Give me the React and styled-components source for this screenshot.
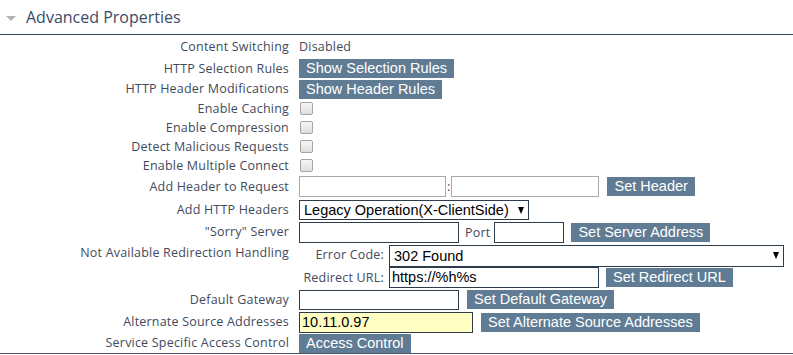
import React from 'react';
import styled, { createGlobalStyle } from 'styled-components';

const GlobalStyle = createGlobalStyle`
  body {
    margin: 0;
    background: #fff;
    font-family: 'Open Sans', sans-serif;
  }
`;

const Section = styled.section`
  width: 793px;
  border-bottom: 1px solid #4d5662;
`;

const Header = styled.div`
  display: flex;
  align-items: center;
  height: 34px;
  padding-left: 6px;
  gap: 10px;
  border-bottom: 1px solid #34495e;
  font-family: 'Open Sans', sans-serif;
  font-size: 16px;
  color: #3b4b67;
`;

const Caret = styled.span`
  width: 0;
  height: 0;
  margin-top: 2px;
  border-left: 5.5px solid transparent;
  border-right: 5.5px solid transparent;
  border-top: 5px solid #b4b4b4;
`;

const Rows = styled.div`
  display: flex;
  flex-direction: column;
`;

const Row = styled.div`
  display: flex;
  align-items: ${({ $top }) => ($top ? 'flex-start' : 'center')};
  height: ${({ $h }) => $h}px;
`;

const labelFont = `
  font-family: 'Open Sans', sans-serif;
  font-size: 12.5px;
  letter-spacing: 0.2px;
  color: #3f4a5d;
  white-space: nowrap;
`;

const Label = styled.div`
  ${labelFont}
  flex: none;
  width: 299px;
  box-sizing: border-box;
  padding-right: 10px;
  padding-top: ${({ $top }) => ($top ? '1px' : '0')};
  text-align: right;
  line-height: 18px;
`;

const Value = styled.div`
  ${labelFont}
  display: flex;
  align-items: center;
  gap: ${({ $gap }) => ($gap ?? 8)}px;
`;

const Text = styled.span`
  ${labelFont}
  margin: ${({ $m }) => $m || '0'};
`;

const Button = styled.button`
  height: 19px;
  padding: 0 7px;
  border: none;
  background: #5f7c94;
  color: #fff;
  font-family: 'Liberation Sans', Arial, sans-serif;
  font-size: 14.5px;
  line-height: 19px;
  white-space: nowrap;
  cursor: pointer;
`;

const Input = styled.input`
  box-sizing: border-box;
  width: ${({ $w }) => $w}px;
  height: ${({ $h }) => $h || 21}px;
  margin: 0;
  padding: 0 2px;
  border: 1px solid ${({ $light }) => ($light ? '#a9a9a9' : '#2d3b4b')};
  background: ${({ $hl }) => ($hl ? '#ffffc4' : '#fff')};
  color: #000;
  font-family: 'Liberation Sans', Arial, sans-serif;
  font-size: 14.5px;
  outline: none;
`;

const Check = styled.input.attrs({ type: 'checkbox' })`
  appearance: none;
  box-sizing: border-box;
  width: 13px;
  height: 13px;
  margin: 0 0 0 1px;
  border: 1px solid #a4a4a4;
  border-radius: 2px;
  background: linear-gradient(#f6f6f6, #dedede);
`;

const SelectWrap = styled.div`
  position: relative;
  width: ${({ $w }) => $w}px;
  height: ${({ $h }) => $h}px;

  &::after {
    content: '';
    position: absolute;
    right: 5px;
    top: 50%;
    margin-top: -3px;
    border-left: 3.5px solid transparent;
    border-right: 3.5px solid transparent;
    border-top: 7px solid #000;
    pointer-events: none;
  }
`;

const Select = styled.select`
  appearance: none;
  box-sizing: border-box;
  width: 100%;
  height: 100%;
  margin: 0;
  padding: 0 0 0 4px;
  border: 1px solid #2d3b4b;
  border-radius: 0;
  background: #fff;
  color: #000;
  font-family: 'Liberation Sans', Arial, sans-serif;
  font-size: 14.5px;
  outline: none;
`;

const Nested = styled.div`
  display: flex;
  flex-direction: column;
`;

const SubRow = styled.div`
  display: flex;
  align-items: center;
  height: ${({ $h }) => $h}px;
`;

const SubLabel = styled.div`
  ${labelFont}
  width: 90px;
  box-sizing: border-box;
  padding-right: 5px;
  text-align: right;
`;

const checks = [
  'Enable Caching',
  'Enable Compression',
  'Detect Malicious Requests',
  'Enable Multiple Connect',
];

export default function App() {
  return (
    <>
      <GlobalStyle />
      <Section>
        <Header>
          <Caret />
          Advanced Properties
        </Header>
        <Rows>
          <Row $h={23}>
            <Label>Content Switching</Label>
            <Value>Disabled</Value>
          </Row>
          <Row $h={21}>
            <Label>HTTP Selection Rules</Label>
            <Value><Button>Show Selection Rules</Button></Value>
          </Row>
          <Row $h={20}>
            <Label>HTTP Header Modifications</Label>
            <Value><Button>Show Header Rules</Button></Value>
          </Row>
          {checks.map((c) => (
            <Row $h={19} key={c}>
              <Label>{c}</Label>
              <Value><Check /></Value>
            </Row>
          ))}
          <Row $h={23}>
            <Label>Add Header to Request</Label>
            <Value $gap={0}>
              <Input $w={147} $light />
              <Text $m="0 1px">:</Text>
              <Input $w={148} $light />
              <Button style={{ marginLeft: 8 }}>Set Header</Button>
            </Value>
          </Row>
          <Row $h={23}>
            <Label>Add HTTP Headers</Label>
            <Value>
              <SelectWrap $w={230} $h={20}>
                <Select defaultValue="legacy">
                  <option value="legacy">Legacy Operation(X-ClientSide)</option>
                </Select>
              </SelectWrap>
            </Value>
          </Row>
          <Row $h={22}>
            <Label>"Sorry" Server</Label>
            <Value $gap={0}>
              <Input $w={160} />
              <Text $m="0 4px 0 6px">Port</Text>
              <Input $w={70} />
              <Button style={{ marginLeft: 7 }}>Set Server Address</Button>
            </Value>
          </Row>
          <Row $h={45} $top>
            <Label $top>Not Available Redirection Handling</Label>
            <Nested>
              <SubRow $h={23}>
                <SubLabel>Error Code:</SubLabel>
                <SelectWrap $w={395} $h={22}>
                  <Select defaultValue="302">
                    <option value="302">302 Found</option>
                  </Select>
                </SelectWrap>
              </SubRow>
              <SubRow $h={22}>
                <SubLabel>Redirect URL:</SubLabel>
                <Input $w={210} defaultValue="https://%h%s" />
                <Button style={{ marginLeft: 7 }}>Set Redirect URL</Button>
              </SubRow>
            </Nested>
          </Row>
          <Row $h={23}>
            <Label>Default Gateway</Label>
            <Value>
              <Input $w={160} $h={20} />
              <Button>Set Default Gateway</Button>
            </Value>
          </Row>
          <Row $h={22}>
            <Label>Alternate Source Addresses</Label>
            <Value>
              <Input $w={174} $hl defaultValue="10.11.0.97" />
              <Button>Set Alternate Source Addresses</Button>
            </Value>
          </Row>
          <Row $h={20}>
            <Label>Service Specific Access Control</Label>
            <Value><Button>Access Control</Button></Value>
          </Row>
        </Rows>
      </Section>
    </>
  );
}
